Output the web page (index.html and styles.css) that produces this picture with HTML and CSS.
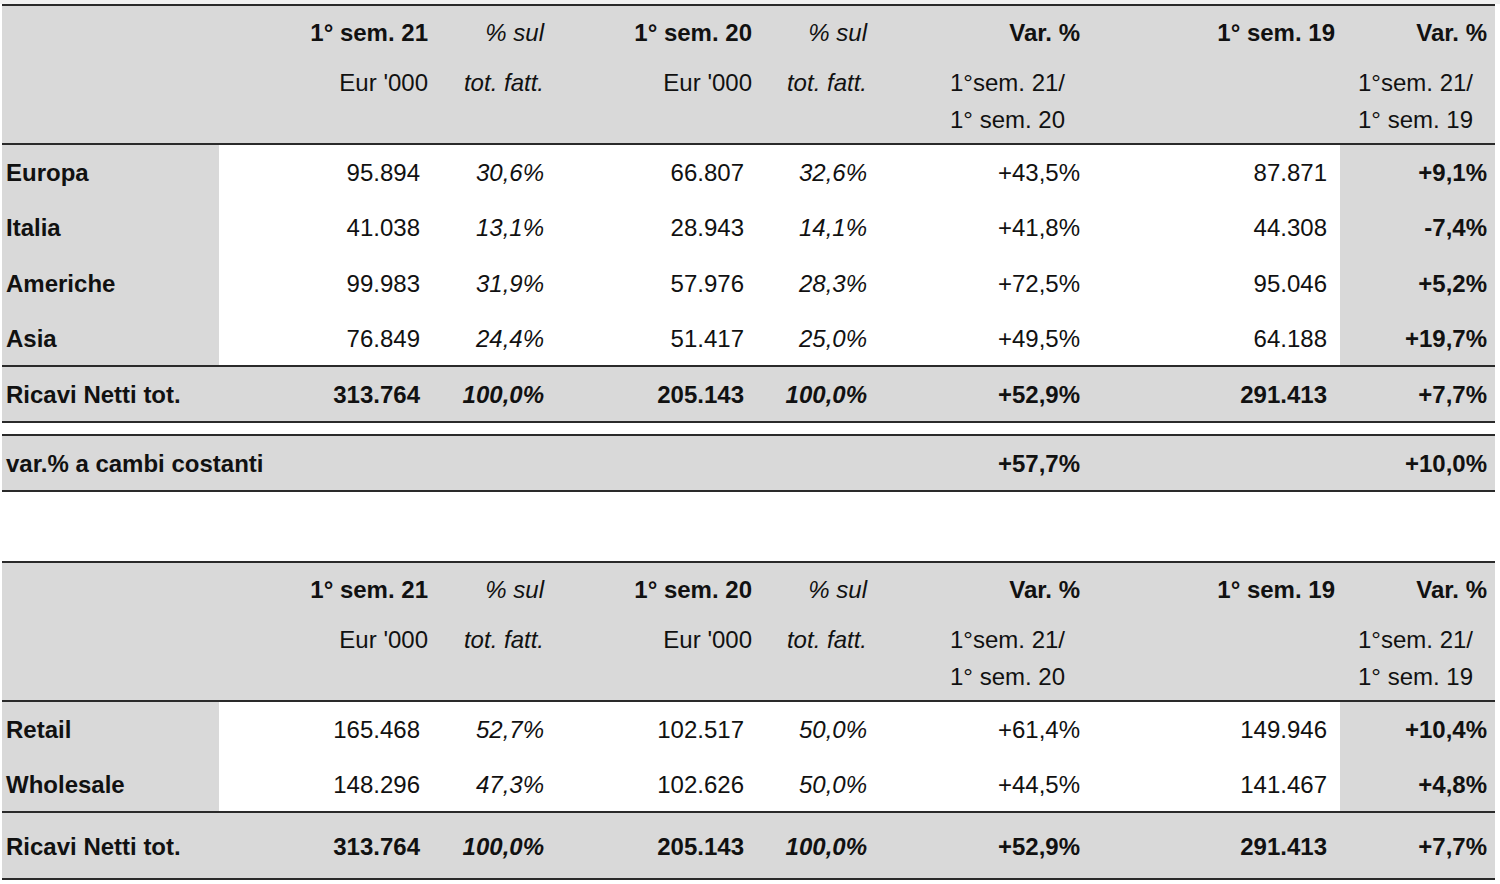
FILE: index.html
```html
<!DOCTYPE html>
<html lang="it">
<head>
<meta charset="utf-8">
<title>Ricavi</title>
<link rel="stylesheet" href="styles.css">
</head>
<body>
<div class="top-strip"></div>
<table class="grid">
  <colgroup>
    <col class="w1"><col class="w2"><col class="w3"><col class="w4"><col class="w5"><col class="w6"><col class="w7"><col class="w8">
  </colgroup>
  <thead>
    <tr class="head">
      <th></th>
      <th class="c2"><div class="h1 b">1° sem. 21</div><div class="h2">Eur '000</div></th>
      <th class="c3"><div class="h1 i">% sul</div><div class="h2 i">tot. fatt.</div></th>
      <th class="c4"><div class="h1 b">1° sem. 20</div><div class="h2">Eur '000</div></th>
      <th class="c5"><div class="h1 i">% sul</div><div class="h2 i">tot. fatt.</div></th>
      <th class="c6"><div class="h1 b">Var. %</div><div class="h2 sub">1°sem. 21/</div><div class="h3 sub">1° sem. 20</div></th>
      <th class="c7"><div class="h1 b">1° sem. 19</div></th>
      <th class="c8"><div class="h1 b">Var. %</div><div class="h2 sub">1°sem. 21/</div><div class="h3 sub">1° sem. 19</div></th>
    </tr>
  </thead>
  <tbody>
    <tr class="row"><td class="lbl">Europa</td><td class="c2 n">95.894</td><td class="c3 i">30,6%</td><td class="c4 n">66.807</td><td class="c5 i">32,6%</td><td class="c6">+43,5%</td><td class="c7 n">87.871</td><td class="c8 b gray">+9,1%</td></tr>
    <tr class="row"><td class="lbl">Italia</td><td class="c2 n">41.038</td><td class="c3 i">13,1%</td><td class="c4 n">28.943</td><td class="c5 i">14,1%</td><td class="c6">+41,8%</td><td class="c7 n">44.308</td><td class="c8 b gray">-7,4%</td></tr>
    <tr class="row"><td class="lbl">Americhe</td><td class="c2 n">99.983</td><td class="c3 i">31,9%</td><td class="c4 n">57.976</td><td class="c5 i">28,3%</td><td class="c6">+72,5%</td><td class="c7 n">95.046</td><td class="c8 b gray">+5,2%</td></tr>
    <tr class="row"><td class="lbl">Asia</td><td class="c2 n">76.849</td><td class="c3 i">24,4%</td><td class="c4 n">51.417</td><td class="c5 i">25,0%</td><td class="c6">+49,5%</td><td class="c7 n">64.188</td><td class="c8 b gray">+19,7%</td></tr>
    <tr class="total"><td class="lbl">Ricavi Netti tot.</td><td class="c2 n">313.764</td><td class="c3 i">100,0%</td><td class="c4 n">205.143</td><td class="c5 i">100,0%</td><td class="c6">+52,9%</td><td class="c7 n">291.413</td><td class="c8">+7,7%</td></tr>
  </tbody>
</table>

<table class="grid var">
  <colgroup>
    <col class="w1"><col class="w2"><col class="w3"><col class="w4"><col class="w5"><col class="w6"><col class="w7"><col class="w8">
  </colgroup>
  <tbody>
    <tr class="total varrow"><td class="lbl" colspan="5">var.% a cambi costanti</td><td class="c6">+57,7%</td><td class="c7"></td><td class="c8">+10,0%</td></tr>
  </tbody>
</table>

<table class="grid second">
  <colgroup>
    <col class="w1"><col class="w2"><col class="w3"><col class="w4"><col class="w5"><col class="w6"><col class="w7"><col class="w8">
  </colgroup>
  <thead>
    <tr class="head">
      <th></th>
      <th class="c2"><div class="h1 b">1° sem. 21</div><div class="h2">Eur '000</div></th>
      <th class="c3"><div class="h1 i">% sul</div><div class="h2 i">tot. fatt.</div></th>
      <th class="c4"><div class="h1 b">1° sem. 20</div><div class="h2">Eur '000</div></th>
      <th class="c5"><div class="h1 i">% sul</div><div class="h2 i">tot. fatt.</div></th>
      <th class="c6"><div class="h1 b">Var. %</div><div class="h2 sub">1°sem. 21/</div><div class="h3 sub">1° sem. 20</div></th>
      <th class="c7"><div class="h1 b">1° sem. 19</div></th>
      <th class="c8"><div class="h1 b">Var. %</div><div class="h2 sub">1°sem. 21/</div><div class="h3 sub">1° sem. 19</div></th>
    </tr>
  </thead>
  <tbody>
    <tr class="row"><td class="lbl">Retail</td><td class="c2 n">165.468</td><td class="c3 i">52,7%</td><td class="c4 n">102.517</td><td class="c5 i">50,0%</td><td class="c6">+61,4%</td><td class="c7 n">149.946</td><td class="c8 b gray">+10,4%</td></tr>
    <tr class="row"><td class="lbl">Wholesale</td><td class="c2 n">148.296</td><td class="c3 i">47,3%</td><td class="c4 n">102.626</td><td class="c5 i">50,0%</td><td class="c6">+44,5%</td><td class="c7 n">141.467</td><td class="c8 b gray">+4,8%</td></tr>
    <tr class="total tall"><td class="lbl">Ricavi Netti tot.</td><td class="c2 n">313.764</td><td class="c3 i">100,0%</td><td class="c4 n">205.143</td><td class="c5 i">100,0%</td><td class="c6">+52,9%</td><td class="c7 n">291.413</td><td class="c8">+7,7%</td></tr>
  </tbody>
</table>
</body>
</html>
```

FILE: styles.css
```css
html, body {
  margin: 0;
  padding: 0;
  background: #ffffff;
}
body {
  font-family: "Liberation Sans", Arial, sans-serif;
  font-size: 24px;
  color: #111111;
}
.top-strip {
  height: 4px;
  background: #f1f1f1;
}
.grid {
  border-collapse: collapse;
  table-layout: fixed;
  width: 1493px;
  margin-left: 2px;
}
.w1 { width: 217px; }
.w2 { width: 221px; }
.w3 { width: 116px; }
.w4 { width: 208px; }
.w5 { width: 116px; }
.w6 { width: 212px; }
.w7 { width: 248px; }
.w8 { width: 155px; }

.grid th, .grid td {
  padding: 0;
  text-align: right;
  white-space: nowrap;
  vertical-align: middle;
}
.grid td {
  padding-top: 2px;
}
.grid thead tr {
  border-top: 2px solid #2a2a2a;
  border-bottom: 2px solid #2a2a2a;
  background: #d9d9d9;
}
.grid th {
  vertical-align: top;
  font-weight: normal;
  padding-top: 9px;
  padding-bottom: 5px;
}
.h1 { height: 36px; line-height: 36px; }
.h2 { height: 37px; line-height: 37px; margin-top: 13px; }
.h3 { height: 37px; line-height: 37px; }
.b { font-weight: bold; }
.i { font-style: italic; }

.row { height: 55.5px; }
.row td { background: #ffffff; }
.row td.lbl, .row td.gray { background: #d9d9d9; }
.lbl {
  text-align: left !important;
  font-weight: bold;
  padding-left: 4px !important;
}
.total {
  height: 56px;
  background: #d9d9d9;
  font-weight: bold;
  border-top: 2px solid #2a2a2a;
  border-bottom: 2px solid #2a2a2a;
}
.total td { background: #d9d9d9; }
.total.tall { height: 67px; }

.var { margin-top: 11px; }
.varrow { height: 56px; }
.second { margin-top: 69px; }

.c2 { padding-right: 12px !important; }
.c2.n { padding-right: 20px !important; }
.c3 { padding-right: 12px !important; }
.c4 { padding-right: 12px !important; }
.c4.n { padding-right: 20px !important; }
.c5 { padding-right: 13px !important; }
.c6 { padding-right: 12px !important; }
.c7 { padding-right: 5px !important; }
.c7.n { padding-right: 13px !important; }
.c8 { padding-right: 8px !important; }
.sub { padding-right: 15px; }
.c8 .sub { padding-right: 14px; }
```
